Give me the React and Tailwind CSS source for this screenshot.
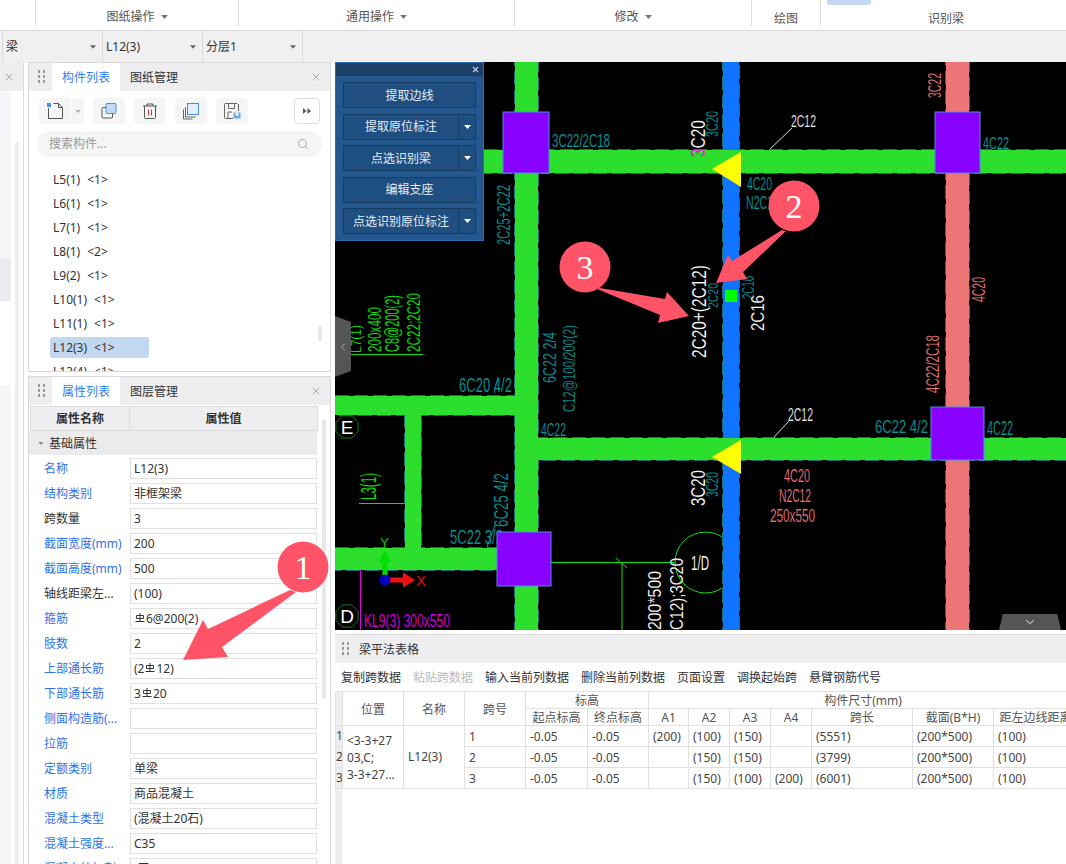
import { X, Search, ChevronLeft, ChevronDown } from 'lucide-react'

const teal = '#0a979b'
const salmon = '#ec7676'
const lime = '#10e010'

function Tri({ className = 'text-[#777]', w = 7, h = 4 }) {
  return (
    <svg width={w} height={h} viewBox="0 0 7 4" className={className}>
      <path d="M0 0h7L3.5 4z" fill="currentColor" />
    </svg>
  )
}

function Grip() {
  return (
    <svg width="7" height="14" viewBox="0 0 7 14" className="text-[#999]">
      {[0, 5, 10].map(y => (
        <g key={y} fill="currentColor">
          <rect x="0" y={y} width="2" height="3" />
          <rect x="5" y={y} width="2" height="3" />
        </g>
      ))}
    </svg>
  )
}

function SteelMark() {
  return (
    <svg width="10" height="11" viewBox="0 0 10 11" className="inline-block align-[2px] mx-[1px]">
      <path d="M5 0v8M1.5 2.5h7v3h-7zM0.5 8.5h9" fill="none" stroke="#333" strokeWidth="1" />
    </svg>
  )
}

function PanelHeader({ tabs }) {
  return (
    <div className="h-[28px] shrink-0 flex items-stretch bg-[#eeeef0] relative">
      <div className="w-[23px] flex items-center justify-center pl-[1px]">
        <Grip />
      </div>
      {tabs.map((t, i) => (
        <div
          key={t}
          className={
            i === 0
              ? 'w-[68px] pt-[1px] flex items-center justify-center bg-white text-[#2f7ff0]'
              : 'w-[68px] pt-[1px] flex items-center justify-center text-[#333]'
          }
        >
          {t}
        </div>
      ))}
      <X size={12} className="absolute right-[8px] top-[8px] text-[#aaa]" />
    </div>
  )
}

function ToolButton({ children }) {
  return <div className="w-[32px] h-[26px] rounded-[4px] bg-[#f5f5f5] flex items-center justify-center">{children}</div>
}

const listItems = [
  ['L5(1)', '1'],
  ['L6(1)', '1'],
  ['L7(1)', '1'],
  ['L8(1)', '2'],
  ['L9(2)', '1'],
  ['L10(1)', '1'],
  ['L11(1)', '1'],
  ['L12(3)', '1'],
  ['L13(4)', '1'],
]

function ComponentPanel() {
  return (
    <div className="h-[310px] shrink-0 border border-[#d9d9d9] flex flex-col overflow-hidden relative">
      <PanelHeader tabs={['构件列表', '图纸管理']} />
      <div className="flex items-center shrink-0 pl-[10px] mt-[7px] h-[26px]">
        <div className="w-[32px] h-[26px] rounded-l-[4px] bg-[#f5f5f5] flex items-center justify-center">
          <svg width="18" height="18" viewBox="0 0 18 18" fill="none">
            <path d="M2.5 6v10.5h14V5.5l-4-4h-5" stroke="#555" />
            <path d="M12.5 1.5v4h4" stroke="#555" />
            <rect x="1" y="1" width="4" height="4" fill="#4a90e2" />
          </svg>
        </div>
        <div className="w-[12px] h-[26px] ml-[1px] rounded-r-[4px] bg-[#f5f5f5] flex items-center justify-center">
          <Tri className="text-[#aaa]" w={6} h={3} />
        </div>
        <div className="flex gap-[9px] ml-[9px]">
          <ToolButton>
            <svg width="18" height="18" viewBox="0 0 18 18" fill="none">
              <rect x="6" y="1.5" width="10" height="10" rx="1" fill="#c4d9f3" stroke="#4a90e2" />
              <path d="M6 5.5H3a1 1 0 0 0-1 1V15a1 1 0 0 0 1 1h8.5a1 1 0 0 0 1-1v-3.5" stroke="#555" />
            </svg>
          </ToolButton>
          <ToolButton>
            <svg width="16" height="18" viewBox="0 0 16 18" fill="none">
              <path d="M1 4h14M5 4V2h6v2M2.5 4v11.5a1 1 0 0 0 1 1h9a1 1 0 0 0 1-1V4" stroke="#555" />
              <path d="M6.5 7.5v6M9.5 7.5v6" stroke="#d9322e" />
            </svg>
          </ToolButton>
          <ToolButton>
            <svg width="18" height="18" viewBox="0 0 18 18" fill="none">
              <rect x="5.5" y="1.5" width="11" height="11" fill="#e3eefb" stroke="#4a90e2" />
              <path d="M3.5 5v10h10M1.5 7.5v9.5h9" stroke="#666" />
            </svg>
          </ToolButton>
          <ToolButton>
            <svg width="18" height="18" viewBox="0 0 18 18" fill="none">
              <path d="M14 1.5H2.500a1 1 0 0 0-1 1v13a1 1 0 0 0 1 1H10" stroke="#666" />
              <path d="M5.500 1.500v5h6v-5M5 16.500V10h4M15.500 2v7" stroke="#666" />
              <rect x="10.500" y="10.500" width="7" height="6" fill="#6ea7ea" />
              <rect x="12.500" y="10.500" width="3" height="3" fill="#fff" />
            </svg>
          </ToolButton>
        </div>
        <div className="ml-[46px] w-[26px] h-[26px] rounded-[4px] border border-[#dcdcdc] flex items-center justify-center">
          <svg width="8" height="6" viewBox="0 0 8 6" className="text-[#555]">
            <path d="M0 0l3.500 3L0 6zM4.500 0L8 3 4.500 6z" fill="currentColor" />
          </svg>
        </div>
      </div>
      <div className="mx-[8px] mt-[7px] h-[26px] shrink-0 rounded-full bg-[#f5f5f5] flex items-center justify-between pl-[12px] pr-[13px] text-[#999]">
        <span>搜索构件...</span>
        <Search size={12} className="text-[#aaa]" />
      </div>
      <div className="mt-[10px] pl-[21px] shrink-0">
        {listItems.map(([name, n]) => (
          <div key={name} className="h-[24px] flex items-center">
            <span
              className={
                name === 'L12(3)'
                  ? 'h-[21px] w-[99px] flex items-center gap-[7px] pl-[3px] pt-[1px] rounded-[3px] bg-[#c2d8f0] text-[#333]'
                  : 'h-[21px] flex items-center gap-[7px] pl-[3px] pt-[1px] text-[#333]'
              }
            >
              <span>{name}</span>
              <span>{'<' + n + '>'}</span>
            </span>
          </div>
        ))}
      </div>
      <div className="absolute right-[8px] top-[263px] w-[4px] h-[15px] rounded-full bg-[#e8e8e8]" />
    </div>
  )
}

const props = [
  ['名称', 'L12(3)', 1],
  ['结构类别', '非框架梁', 1],
  ['跨数量', '3', 0],
  ['截面宽度(mm)', '200', 1],
  ['截面高度(mm)', '500', 1],
  ['轴线距梁左...', '(100)', 0],
  ['箍筋', <><SteelMark />6@200(2)</>, 1],
  ['肢数', '2', 1],
  ['上部通长筋', <>(2<SteelMark />12)</>, 1],
  ['下部通长筋', <>3<SteelMark />20</>, 1],
  ['侧面构造筋(...', '', 1],
  ['拉筋', '', 1],
  ['定额类别', '单梁', 1],
  ['材质', '商品混凝土', 1],
  ['混凝土类型', '(混凝土20石)', 1],
  ['混凝土强度...', 'C35', 1],
  ['混凝土外加剂', '(无)', 1],
]

function PropertyPanel() {
  return (
    <div className="flex-1 min-h-0 border border-[#d9d9d9] border-b-0 flex flex-col overflow-hidden relative">
      <PanelHeader tabs={['属性列表', '图层管理']} />
      <div className="w-[288px] ml-[1px] mt-[1px] h-[25px] shrink-0 flex border-y border-[#dcdcdc] bg-[#eeeef0] font-bold text-[#333]">
        <div className="w-[100px] pt-[1px] flex items-center justify-center border-x border-[#dcdcdc]">属性名称</div>
        <div className="flex-1 pt-[1px] flex items-center justify-center border-r border-[#dcdcdc]">属性值</div>
      </div>
      <div className="w-[288px] h-[24px] shrink-0 flex items-center bg-[#ebebeb] text-[#333] pl-[9px] gap-[5px]">
        <Tri className="text-[#888]" w={6} h={3} />
        <span className="pt-[1px]">基础属性</span>
      </div>
      <div className="w-[288px] mt-[1px] shrink-0">
        {props.map(([label, value, blue]) => (
          <div key={label} className="h-[25px] flex items-center">
            <div
              className={
                blue
                  ? 'w-[101px] pl-[15px] shrink-0 whitespace-nowrap text-[#2f72e8]'
                  : 'w-[101px] pl-[15px] shrink-0 whitespace-nowrap text-[#333]'
              }
            >
              {label}
            </div>
            <div className="w-[187px] h-[21px] border border-[#dfdfdf] flex items-center pl-[3px] text-[#333] whitespace-nowrap">
              {value}
            </div>
          </div>
        ))}
      </div>
      <div className="absolute left-[293px] top-[42px] w-[4px] h-[280px] rounded-full bg-[#e8e8e8]" />
    </div>
  )
}

function CadH({ x, y, w, h, fill, children }) {
  return (
    <text
      x={x}
      y={y}
      fill={fill}
      stroke="#000"
      strokeWidth="0.15"
      fontSize={h / 0.72}
      fontFamily="'Liberation Sans', sans-serif"
      textLength={w}
      lengthAdjust="spacingAndGlyphs"
    >
      {children}
    </text>
  )
}

function CadV({ x1, x2, y1, y2, fill, children }) {
  return (
    <text
      x={x2}
      y={y2}
      fill={fill}
      stroke="#000"
      strokeWidth="0.15"
      fontSize={(x2 - x1) / 0.72}
      fontFamily="'Liberation Sans', sans-serif"
      textLength={y2 - y1}
      lengthAdjust="spacingAndGlyphs"
      transform={`rotate(-90 ${x2} ${y2})`}
    >
      {children}
    </text>
  )
}

const beams = [
  { x: 723, y: 62, w: 16, h: 568, fill: '#0f74ff' },
  { x: 946, y: 62, w: 23, h: 568, fill: salmon },
  { x: 515, y: 62, w: 23, h: 568, fill: '#2ddf2d' },
  { x: 484, y: 150, w: 582, h: 23, fill: '#2ddf2d' },
  { x: 515, y: 438, w: 551, h: 22, fill: '#2ddf2d' },
  { x: 335, y: 396, w: 180, h: 19, fill: '#2ddf2d' },
  { x: 405, y: 415, w: 16, h: 133, fill: '#2ddf2d' },
  { x: 335, y: 548, w: 163, h: 22, fill: '#2ddf2d' },
]

function Beams() {
  return (
    <g>
      {beams.map((b, i) => (
        <rect key={i} x={b.x} y={b.y} width={b.w} height={b.h} fill="none" stroke="#1b6f7a" strokeWidth="2" strokeDasharray="14 5" />
      ))}
      {beams.map((b, i) => (
        <rect key={i} x={b.x} y={b.y} width={b.w} height={b.h} fill={b.fill} />
      ))}
    </g>
  )
}

function Column({ x, y, s, h }) {
  return <rect x={x} y={y} width={s} height={h} fill="#8800ff" stroke="#4a90e2" strokeWidth="1" />
}

function Octagon({ cx, cy, label }) {
  const r = 12
  const pts = [...Array(8)]
    .map((_, i) => {
      const a = (Math.PI / 4) * i + Math.PI / 8
      return `${cx + r * Math.cos(a)},${cy + r * Math.sin(a)}`
    })
    .join(' ')
  return (
    <g>
      <polygon points={pts} fill="none" stroke="#0a8a0a" />
      <text x={cx} y={cy + 7} textAnchor="middle" fill="#fff" fontSize="19" fontFamily="'Liberation Sans', sans-serif">
        {label}
      </text>
    </g>
  )
}

function Drawing() {
  return (
    <svg width="731" height="568" viewBox="335 62 731 568" className="block">
      <rect x="335" y="62" width="731" height="568" fill="#000" />

      {/* thin lines, under the beams */}
      <path d="M551 562.500H675M622 562.500V630M616 558l11 10" stroke={lime} fill="none" />
      <circle cx="705.500" cy="562.500" r="30.500" stroke={lime} fill="none" />
      <path d="M360.500 570V630" stroke="#e000e0" />
      <path d="M351 354.500H423M359 503.500H405" stroke={lime} />
      <path d="M769 150L792 128M773 438L789 421" stroke="#ddd" />
      <path d="M494 393l4 -16M487 547l8 -22" stroke={teal} />

      <Beams />

      <polygon points="712,169 741,152 741,187" fill="#ffff00" />
      <polygon points="712,457 741,440 741,474" fill="#ffff00" />
      <rect x="725" y="290" width="12" height="12" fill="#00ff00" />

      <CadH x={450} y={544} w={53} h={14} fill={teal}>5C22 3/2</CadH>
      <Column x={503} y={112} s={46} h={61} />
      <Column x={935} y={112} s={45} h={61} />
      <Column x={931} y={407} s={53} h={53} />
      <Column x={497} y={532} s={54} h={54} />

      <CadH x={552} y={147} w={58} h={13} fill={teal}>3C22/2C18</CadH>
      <CadV x1={497} x2={510} y1={185} y2={245} fill={teal}>2C25+2C22</CadV>
      <CadV x1={691} x2={705} y1={120} y2={157} fill="#fff">
        <tspan fill="#e040e0">3</tspan>C20
      </CadV>
      <CadV x1={706} x2={718} y1={111} y2={137} fill={teal}>3C20</CadV>
      <CadH x={791} y={127} w={25} h={12} fill="#e8e8e8">2C12</CadH>
      <CadH x={983} y={149} w={26} h={12} fill={teal}>4C22</CadH>
      <CadV x1={928} x2={941} y1={73} y2={98} fill={salmon}>3C22</CadV>
      <CadH x={747} y={190} w={25} h={13} fill={teal}>4C20</CadH>
      <CadH x={746} y={209} w={33} h={13} fill={teal}>N2C12</CadH>
      <CadV x1={707} x2={718} y1={283} y2={308} fill={teal}>2C20</CadV>
      <CadV x1={742} x2={754} y1={276} y2={299} fill={teal}>2C16</CadV>
      <CadV x1={751} x2={764} y1={295} y2={331} fill="#fff">2C16</CadV>
      <CadV x1={691} x2={706} y1={265} y2={358} fill="#fff">2C20+(2C12)</CadV>

      <CadV x1={351} x2={361} y1={325} y2={353} fill={lime}>L7(1)</CadV>
      <CadV x1={368} x2={381} y1={307} y2={352} fill={lime}>200x400</CadV>
      <CadV x1={385} x2={399} y1={295} y2={352} fill={lime}>C8@200(2)</CadV>
      <CadV x1={407} x2={420} y1={293} y2={352} fill={lime}>2C22;2C20</CadV>

      <CadH x={459} y={392} w={53} h={14} fill={teal}>6C20 4/2</CadH>
      <CadV x1={543} x2={556} y1={332} y2={383} fill={teal}>6C22 2/4</CadV>
      <CadV x1={563} x2={575} y1={325} y2={412} fill={teal}>C12@100/200(2)</CadV>
      <CadH x={541} y={436} w={25} h={13} fill={teal}>4C22</CadH>
      <CadV x1={494} x2={508} y1={473} y2={527} fill={teal}>6C25 4/2</CadV>
      <CadV x1={360} x2={376} y1={473} y2={500} fill={lime}>L3(1)</CadV>
      <CadV x1={691} x2={705} y1={470} y2={506} fill="#fff">3C20</CadV>
      <CadV x1={706} x2={718} y1={472} y2={497} fill={teal}>3C20</CadV>
      <CadV x1={648} x2={661} y1={571} y2={630} fill="#fff">200*500</CadV>
      <CadV x1={670} x2={683} y1={558} y2={630} fill="#fff">C12);3C20</CadV>
      <CadH x={691} y={570} w={18} h={14} fill="#fff">1/D</CadH>
      <CadH x={364} y={627} w={86} h={13} fill="#e000e0">KL9(3) 300x550</CadH>
      <CadH x={788} y={421} w={25} h={13} fill="#e8e8e8">2C12</CadH>
      <CadH x={875} y={433} w={53} h={13} fill={teal}>6C22 4/2</CadH>
      <CadH x={987} y={435} w={26} h={14} fill={teal}>4C22</CadH>
      <CadV x1={972} x2={985} y1={277} y2={302} fill={salmon}>4C20</CadV>
      <CadV x1={926} x2={939} y1={335} y2={393} fill={salmon}>4C22/2C18</CadV>
      <CadH x={784} y={482} w={26} h={13} fill={salmon}>4C20</CadH>
      <CadH x={779} y={502} w={32} h={13} fill={salmon}>N2C12</CadH>
      <CadH x={770} y={522} w={45} h={13} fill={salmon}>250x550</CadH>

      <Octagon cx={347} cy={427} label="E" />
      <Octagon cx={347} cy={616} label="D" />

      {/* origin marker */}
      <path d="M382.500 580v-18h-4l6.500 -12 6.500 12h-4v18z" fill="#00e000" />
      <path d="M385 577.500h18v-5l12 7.500 -12 7.500v-5h-18z" fill="#f01010" />
      <circle cx="385" cy="580" r="5.500" fill="#0000c0" />
      <CadH x={380} y={547} w={9} h={9} fill="#00e000">Y</CadH>
      <CadH x={416} y={586} w={10} h={11} fill="#f01010">X</CadH>
    </svg>
  )
}

function FloatButton({ label, split }) {
  return (
    <div className="flex h-[26px] text-[#e6edf5]">
      <div className="flex-1 pt-[1px] border border-[#173c62] bg-[#1f4e80] flex items-center justify-center">{label}</div>
      {split && (
        <div className="w-[17px] border border-l-0 border-[#173c62] bg-[#1f4e80] flex items-center justify-center">
          <Tri className="text-white" />
        </div>
      )}
    </div>
  )
}

function FloatPanel() {
  return (
    <div className="absolute left-0 top-0 w-[149px] h-[179px] bg-[#23578d] border border-[#2a6cb0]">
      <div className="h-[13px] bg-[#1b3f66] relative">
        <X size={9} strokeWidth={3} className="absolute right-[3px] top-[2px] text-[#c5d6e8]" />
      </div>
      <div className="flex flex-col gap-[5.500px] px-[7px] pt-[6px]">
        <FloatButton label="提取边线" />
        <FloatButton label="提取原位标注" split />
        <FloatButton label="点选识别梁" split />
        <FloatButton label="编辑支座" />
        <FloatButton label="点选识别原位标注" split />
      </div>
    </div>
  )
}

const thCls = 'border border-[#e0e0e0] font-normal text-[#555] text-center px-0 pb-0 pt-[2px] leading-[14px]'
const tdCls = 'border border-[#e0e0e0] font-normal text-[#444] text-left pl-[4px] pr-0 pb-0 pt-[2px] h-[21px] leading-[16px] whitespace-nowrap'
const rnCls = 'border border-[#e0e0e0] bg-[#eeeef0] text-[#444] text-left p-0 leading-[16px] overflow-hidden'

const spans = [
  { a1: '(200)', a2: '(100)', a3: '(150)', a4: '', len: '(5551)' },
  { a1: '', a2: '(150)', a3: '(150)', a4: '', len: '(3799)' },
  { a1: '', a2: '(150)', a3: '(100)', a4: '(200)', len: '(6001)' },
]

function BeamTable() {
  return (
    <table className="table-fixed border-collapse w-[741px]">
      <colgroup>
        {[7, 61, 61, 61, 62, 61, 40, 41, 41, 41, 101, 81, 84].map((w, i) => (
          <col key={i} style={{ width: w }} />
        ))}
      </colgroup>
      <thead>
        <tr className="h-[17px]">
          <th rowSpan={2} className="border border-[#e0e0e0] bg-[#eeeef0] p-0" />
          <th rowSpan={2} className={thCls}>位置</th>
          <th rowSpan={2} className={thCls}>名称</th>
          <th rowSpan={2} className={thCls}>跨号</th>
          <th colSpan={2} className={thCls}>标高</th>
          <th colSpan={7} className={thCls}>构件尺寸(mm)</th>
        </tr>
        <tr className="h-[17px]">
          {['起点标高', '终点标高', 'A1', 'A2', 'A3', 'A4', '跨长', '截面(B*H)', '距左边线距离'].map(h => (
            <th key={h} className={thCls + ' whitespace-nowrap overflow-hidden'}>{h}</th>
          ))}
        </tr>
      </thead>
      <tbody>
        {spans.map((s, i) => (
          <tr key={i} className="h-[21px]">
            <td className={rnCls}>{i + 1}</td>
            {i === 0 && (
              <td rowSpan={3} className="border border-[#e0e0e0] text-[#444] pl-[4px] p-0 leading-[17px]">
                &lt;3-3+27
                <br />
                03,C;
                <br />
                3-3+27...
              </td>
            )}
            {i === 0 && (
              <td rowSpan={3} className="border border-[#e0e0e0] text-[#444] pl-[4px] p-0">
                L12(3)
              </td>
            )}
            <td className={tdCls}>{i + 1}</td>
            <td className={tdCls}>-0.05</td>
            <td className={tdCls}>-0.05</td>
            <td className={tdCls}>{s.a1}</td>
            <td className={tdCls}>{s.a2}</td>
            <td className={tdCls}>{s.a3}</td>
            <td className={tdCls}>{s.a4}</td>
            <td className={tdCls}>{s.len}</td>
            <td className={tdCls}>(200*500)</td>
            <td className={tdCls}>(100)</td>
          </tr>
        ))}
      </tbody>
    </table>
  )
}

function BottomPanel() {
  const actions = [
    ['复制跨数据', 'text-[#333]'],
    ['粘贴跨数据', 'text-[#bbb]'],
    ['输入当前列数据', 'text-[#333]'],
    ['删除当前列数据', 'text-[#333]'],
    ['页面设置', 'text-[#333]'],
    ['调换起始跨', 'text-[#333]'],
    ['悬臂钢筋代号', 'text-[#333]'],
  ]
  return (
    <div className="flex-1 min-h-0 border-t border-[#d9d9d9] flex flex-col overflow-hidden relative">
      <div className="h-[28px] shrink-0 bg-[#eeeef0] flex items-center pl-[7px] gap-[10px] text-[#333]">
        <Grip />
        <span className="pt-[1px]">梁平法表格</span>
      </div>
      <div className="h-[28px] shrink-0 flex items-center pl-[6px] pt-[1px] gap-[12px]">
        {actions.map(([t, c]) => (
          <span key={t} className={c}>{t}</span>
        ))}
      </div>
      <div className="overflow-hidden">
        <BeamTable />
      </div>
      <div className="absolute left-0 top-[154px] bottom-0 w-[7px] bg-[#eeeef0]" />
    </div>
  )
}

function Annotation({ cx, cy, label, points }) {
  return (
    <g fill="#ff5468">
      <polygon points={points} />
      <circle cx={cx} cy={cy} r="25.500" />
      <text x={cx} y={cy + 12} textAnchor="middle" fill="#fff" fontSize="34" fontFamily="'Liberation Serif', serif">
        {label}
      </text>
    </g>
  )
}

export default function App() {
  return (
    <div className="w-[1066px] h-[864px] relative overflow-hidden bg-white flex flex-col text-[12px] font-['Noto_Sans','Noto_Sans_CJK_SC',sans-serif]">
      {/* ribbon captions */}
      <div className="h-[31px] shrink-0 border-b border-[#d9d9d9] flex text-[#555] relative">
        <div className="w-[36px] h-[26px] border-r border-[#dcdcdc]" />
        <div className="w-[203px] h-[26px] border-r border-[#dcdcdc] flex items-center justify-center gap-[6px] pt-[8px]">
          图纸操作 <Tri />
        </div>
        <div className="w-[276px] h-[26px] border-r border-[#dcdcdc] flex items-center justify-center gap-[6px] pt-[8px]">
          通用操作 <Tri />
        </div>
        <div className="w-[237px] h-[26px] border-r border-[#dcdcdc] flex items-center justify-center gap-[6px] pt-[8px]">
          修改 <Tri />
        </div>
        <div className="w-[69px] h-[26px] border-r border-[#dcdcdc] flex items-center justify-center pt-[11px]">绘图</div>
        <div className="flex-1 h-[26px] flex items-center justify-center pt-[11px] pl-[5px]">识别梁</div>
        <div className="absolute left-[827px] top-0 w-[44px] h-[5px] rounded-b-[3px] bg-[#c2d8f0]" />
      </div>

      {/* selector bar */}
      <div className="h-[31px] shrink-0 bg-[#f0f0f0] flex pl-[2px] text-[#333]">
        {['梁', 'L12(3)', '分层1'].map(t => (
          <div key={t} className="w-[100px] border-l border-[#d9d9d9] last:border-r last:w-[101px] flex items-center justify-between pl-[3px] pr-[6px]">
            <span>{t}</span>
            <Tri className="text-[#666]" w={6} h={4} />
          </div>
        ))}
      </div>

      <div className="flex-1 min-h-0 flex">
        {/* collapsed side panel */}
        <div className="w-[24px] shrink-0 border-r border-[#dcdcdc] flex flex-col">
          <div className="h-[29px] shrink-0 bg-[#eeeef0] flex items-center pl-[3px]">
            <X size={12} className="text-[#aaa]" />
          </div>
          <div className="flex-1 flex relative">
            <div className="w-[11px] flex flex-col">
              <div className="h-[168px] bg-[#f4f6f8]" />
              <div className="h-[42px] bg-[#e9ebee]" />
              <div className="h-[84px]" />
              <div className="flex-1 bg-[#f4f6f8]" />
            </div>
            <div className="absolute left-[15px] top-[51px] bottom-0 w-[4px] bg-[#eeeeee]" />
          </div>
        </div>

        <div className="w-[303px] shrink-0 ml-[4px] flex flex-col gap-[4px]">
          <ComponentPanel />
          <PropertyPanel />
        </div>

        <div className="flex-1 min-w-0 ml-[4px] flex flex-col gap-[4px]">
          <div className="h-[568px] shrink-0 relative overflow-hidden">
            <Drawing />
            <FloatPanel />
            <div className="absolute left-0 top-[254px] w-[16px] h-[61px] bg-[#555] [clip-path:polygon(0_0,100%_10%,100%_90%,0_100%)] flex items-center justify-center text-[#aaa]">
              <ChevronLeft size={12} />
            </div>
            <div className="absolute left-[664px] top-[552px] w-[62px] h-[16px] bg-[#555] [clip-path:polygon(6%_0,94%_0,100%_100%,0_100%)] flex items-center justify-center text-[#aaa]">
              <ChevronDown size={14} />
            </div>
          </div>
          <BottomPanel />
        </div>
      </div>

      {/* callouts drawn on top of the screenshot */}
      <svg width="1066" height="864" viewBox="0 0 1066 864" className="absolute inset-0 pointer-events-none">
        <Annotation cx={303} cy={567} label="1" points="183,660 203,620 208,629 290,590 296,592 222,647 228,657" />
        <Annotation cx={794} cy={206} label="2" points="716,283 728,255 732,261 782,230 786,231 743,272 747,279" />
        <Annotation cx={585} cy={267} label="3" points="600,288 665,299 667,292 689,316 658,323 660,315 597,289" />
      </svg>
    </div>
  )
}
